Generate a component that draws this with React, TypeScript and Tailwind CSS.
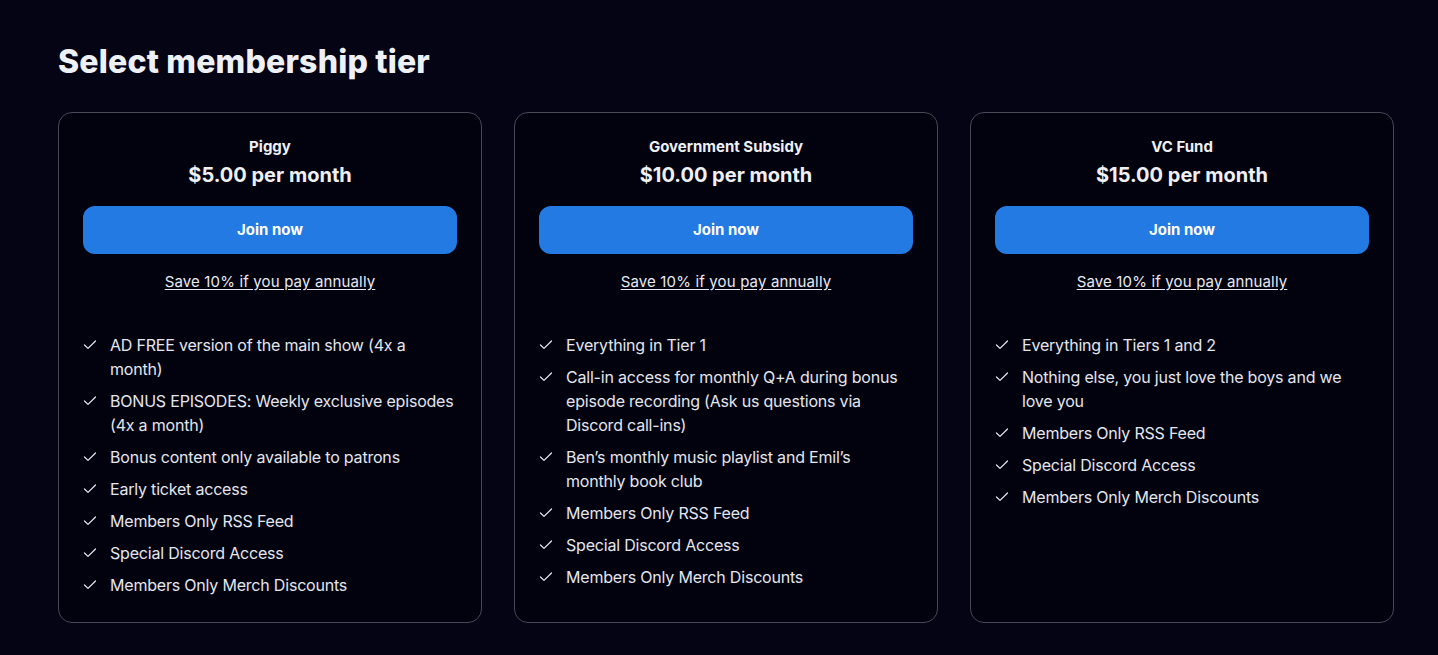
import React from 'react';

type Tier = {
    name: string;
    price: string;
    perks: string[];
};

const tiers: Tier[] = [
    {
        name: 'Piggy',
        price: '$5.00 per month',
        perks: [
            'AD FREE version of the main show (4x a month)',
            'BONUS EPISODES: Weekly exclusive episodes (4x a month)',
            'Bonus content only available to patrons',
            'Early ticket access',
            'Members Only RSS Feed',
            'Special Discord Access',
            'Members Only Merch Discounts',
        ],
    },
    {
        name: 'Government Subsidy',
        price: '$10.00 per month',
        perks: [
            'Everything in Tier 1',
            'Call-in access for monthly Q+A during bonus episode recording (Ask us questions via Discord call-ins)',
            'Ben\u2019s monthly music playlist and Emil\u2019s monthly book club',
            'Members Only RSS Feed',
            'Special Discord Access',
            'Members Only Merch Discounts',
        ],
    },
    {
        name: 'VC Fund',
        price: '$15.00 per month',
        perks: [
            'Everything in Tiers 1 and 2',
            'Nothing else, you just love the boys and we love you',
            'Members Only RSS Feed',
            'Special Discord Access',
            'Members Only Merch Discounts',
        ],
    },
];

function Check() {
    return (
        <svg width="14" height="24" viewBox="0 0 14 24" fill="none" className="shrink-0">
            <path d="M1.5 12 L5 15.4 L12.5 8" stroke="#e4e6ee" strokeWidth="1.3" strokeLinecap="round" strokeLinejoin="round" />
        </svg>
    );
}

function TierCard({ tier }: { tier: Tier }) {
    return (
        <div className="flex flex-col rounded-[14px] border border-[#474858] bg-[#02020f] px-6 pt-6 h-[511px]">
            <p className="text-center text-[15px] leading-5 font-bold text-[#eef0f6]">{tier.name}</p>
            <p className="mt-1 text-center text-[20px] leading-7 font-bold text-[#eef0f6]">{tier.price}</p>
            <button className="mt-[17px] h-12 w-full rounded-xl bg-[#237ae2] text-[15px] font-bold text-white">
                Join now
            </button>
            <a href="#" className="mt-4 text-center text-[15px] leading-6 tracking-[0.15px] text-[#e8eaf2] underline underline-offset-2">
                Save 10% if you pay annually
            </a>
            <ul className="mt-[39px] flex flex-col gap-2">
                {tier.perks.map((perk) => (
                    <li key={perk} className="flex gap-[13px] text-[16px] leading-6 tracking-[-0.2px] text-[#e4e6ee]">
                        <Check />
                        <span>{perk}</span>
                    </li>
                ))}
            </ul>
        </div>
    );
}

export default function App() {
    return (
        <div className="min-h-[655px] bg-[#040414] px-[58px] pt-[42px] font-['Inter',sans-serif]">
            <h1 className="text-[32px] leading-10 font-extrabold tracking-[0.2px] text-[#eef0f8]">Select membership tier</h1>
            <div className="mt-[30px] grid grid-cols-3 gap-8 w-[1336px]">
                {tiers.map((tier) => (
                    <TierCard key={tier.name} tier={tier} />
                ))}
            </div>
        </div>
    );
}
